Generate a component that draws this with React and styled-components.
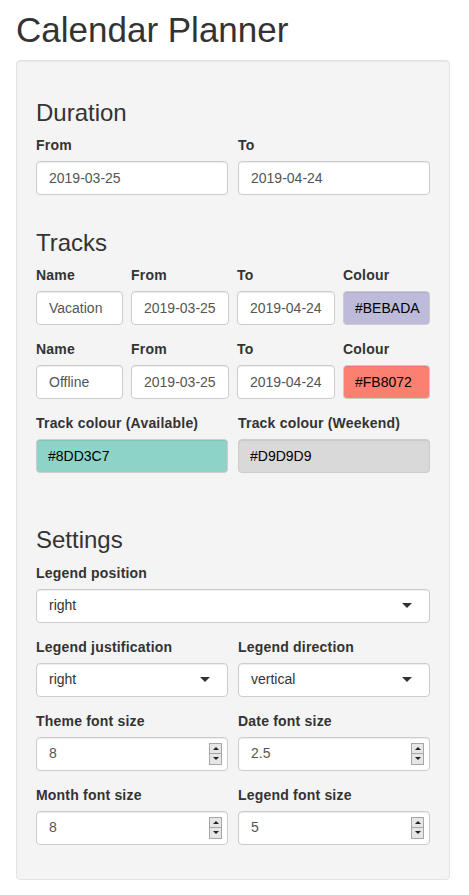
import React from 'react';
import styled, { createGlobalStyle } from 'styled-components';

const GlobalStyle = createGlobalStyle`
  html, body {
    margin: 0;
    padding: 0;
    background: #fff;
  }
  body {
    font-family: "Liberation Sans", Arial, Helvetica, sans-serif;
    font-size: 14px;
    line-height: 1.42857;
    color: #333;
  }
  * {
    box-sizing: border-box;
  }
`;

const Page = styled.div`
  padding: 0 19px 0 16px;
`;

const Title = styled.h1`
  font-size: 35px;
  font-weight: 500;
  line-height: 1.1;
  margin: 11px 0 10px;
  color: #333;
`;

const Well = styled.div`
  background: #f4f4f4;
  border: 1px solid #e3e3e3;
  border-radius: 4px;
  box-shadow: inset 0 1px 1px rgba(0, 0, 0, 0.05);
  padding: 19px;
`;

const SectionTitle = styled.h3`
  font-size: 24px;
  font-weight: 500;
  line-height: 1.1;
  margin: ${props => props.$top}px 0 10px;
  color: #333;
`;

const Row = styled.div`
  display: grid;
  grid-template-columns: ${props => props.$cols};
  column-gap: ${props => props.$gap}px;
`;

const FormGroup = styled.div`
  margin-bottom: 15px;
  min-width: 0;
`;

const Label = styled.label`
  display: block;
  font-weight: 700;
  letter-spacing: 0.2px;
  margin-bottom: 5px;
  white-space: nowrap;
`;

const TextInput = styled.input`
  display: block;
  width: 100%;
  height: 34px;
  padding: 6px 2px 6px ${props => (props.$swatch ? 11 : 12)}px;
  font-family: inherit;
  font-size: 14px;
  line-height: 1.42857;
  color: ${props => (props.$swatch ? '#000' : '#555')};
  background: ${props => props.$swatch || '#fff'};
  border: 1px solid #ccc;
  border-radius: 4px;
  box-shadow: inset 0 1px 1px rgba(0, 0, 0, 0.075);
  outline: none;
`;

const Box = styled.div`
  display: flex;
  align-items: center;
  justify-content: space-between;
  height: 34px;
  padding: 6px ${props => (props.$spin ? 5 : 17)}px 6px 12px;
  background: #fff;
  border: 1px solid #ccc;
  border-radius: 4px;
  box-shadow: inset 0 1px 1px rgba(0, 0, 0, 0.075);
  color: ${props => (props.$spin ? '#555' : '#333')};
`;

const Caret = styled.span`
  width: 0;
  height: 0;
  border-style: solid;
  border-width: 5px 5px 0 5px;
  border-color: #333 transparent transparent transparent;
`;

const Spinner = styled.div`
  display: flex;
  flex-direction: column;
  width: 13px;
  height: 22px;
  border: 1px solid #a6a6a6;
  background: #e6e6e6;
`;

const SpinHalf = styled.div`
  flex: 1;
  display: flex;
  align-items: center;
  justify-content: center;
  & + & {
    border-top: 1px solid #a6a6a6;
  }
  &::after {
    content: '';
    width: 0;
    height: 0;
    border-style: solid;
    border-width: ${props => (props.$up ? '0 3px 3px 3px' : '3px 3px 0 3px')};
    border-color: ${props =>
      props.$up
        ? 'transparent transparent #222 transparent'
        : '#222 transparent transparent transparent'};
  }
`;

function TextField({ label, value, swatch }) {
  return (
    <FormGroup>
      <Label>{label}</Label>
      <TextInput type="text" defaultValue={value} $swatch={swatch} readOnly />
    </FormGroup>
  );
}

function SelectField({ label, value }) {
  return (
    <FormGroup>
      <Label>{label}</Label>
      <Box>
        <span>{value}</span>
        <Caret />
      </Box>
    </FormGroup>
  );
}

function NumberField({ label, value }) {
  return (
    <FormGroup>
      <Label>{label}</Label>
      <Box $spin>
        <span>{value}</span>
        <Spinner>
          <SpinHalf $up />
          <SpinHalf />
        </Spinner>
      </Box>
    </FormGroup>
  );
}

const tracks = [
  { name: 'Vacation', from: '2019-03-25', to: '2019-04-24', colour: '#BEBADA' },
  { name: 'Offline', from: '2019-03-25', to: '2019-04-24', colour: '#FB8072' }
];

export default function App() {
  return (
    <Page>
      <GlobalStyle />
      <Title>Calendar Planner</Title>
      <Well>
        <SectionTitle $top={20}>Duration</SectionTitle>
        <Row $cols="1fr 1fr" $gap={10}>
          <TextField label="From" value="2019-03-25" />
          <TextField label="To" value="2019-04-24" />
        </Row>

        <SectionTitle $top={20}>Tracks</SectionTitle>
        {tracks.map(t => (
          <Row key={t.name} $cols="87fr 98fr 98fr 87fr" $gap={8}>
            <TextField label="Name" value={t.name} />
            <TextField label="From" value={t.from} />
            <TextField label="To" value={t.to} />
            <TextField label="Colour" value={t.colour} swatch={t.colour} />
          </Row>
        ))}
        <Row $cols="1fr 1fr" $gap={10}>
          <TextField label="Track colour (Available)" value="#8DD3C7" swatch="#8DD3C7" />
          <TextField label="Track colour (Weekend)" value="#D9D9D9" swatch="#D9D9D9" />
        </Row>

        <SectionTitle $top={39}>Settings</SectionTitle>
        <SelectField label="Legend position" value="right" />
        <Row $cols="1fr 1fr" $gap={10}>
          <SelectField label="Legend justification" value="right" />
          <SelectField label="Legend direction" value="vertical" />
        </Row>
        <Row $cols="1fr 1fr" $gap={10}>
          <NumberField label="Theme font size" value="8" />
          <NumberField label="Date font size" value="2.5" />
        </Row>
        <Row $cols="1fr 1fr" $gap={10}>
          <NumberField label="Month font size" value="8" />
          <NumberField label="Legend font size" value="5" />
        </Row>
      </Well>
    </Page>
  );
}
